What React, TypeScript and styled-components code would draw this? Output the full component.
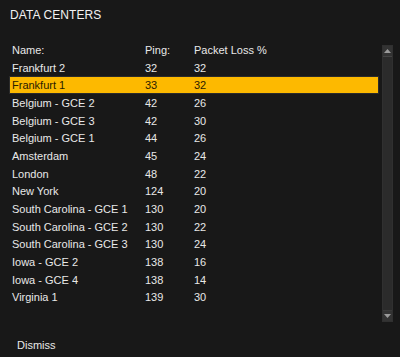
import React from 'react';
import styled, { createGlobalStyle } from 'styled-components';

const servers = [
  { name: 'Frankfurt 2', ping: 32, loss: 32 },
  { name: 'Frankfurt 1', ping: 33, loss: 32, selected: true },
  { name: 'Belgium - GCE 2', ping: 42, loss: 26 },
  { name: 'Belgium - GCE 3', ping: 42, loss: 30 },
  { name: 'Belgium - GCE 1', ping: 44, loss: 26 },
  { name: 'Amsterdam', ping: 45, loss: 24 },
  { name: 'London', ping: 48, loss: 22 },
  { name: 'New York', ping: 124, loss: 20 },
  { name: 'South Carolina - GCE 1', ping: 130, loss: 20 },
  { name: 'South Carolina - GCE 2', ping: 130, loss: 22 },
  { name: 'South Carolina - GCE 3', ping: 130, loss: 24 },
  { name: 'Iowa - GCE 2', ping: 138, loss: 16 },
  { name: 'Iowa - GCE 4', ping: 138, loss: 14 },
  { name: 'Virginia 1', ping: 139, loss: 30 },
];

const GlobalStyle = createGlobalStyle`
  body {
    margin: 0;
    background: #181818;
    font-family: 'Liberation Sans', Arial, sans-serif;
  }
`;

const App = () => {
  return (
    <Window>
      <GlobalStyle />
      <Title>DATA CENTERS</Title>
      <Panel>
        <List>
          <Row $header>
            <span>Name:</span>
            <span>Ping:</span>
            <span>Packet Loss %</span>
          </Row>
          {servers.map((s) => (
            <Row key={s.name} $selected={s.selected}>
              <span>{s.name}</span>
              <span>{s.ping}</span>
              <span>{s.loss}</span>
            </Row>
          ))}
        </List>
        <Scrollbar>
          <ArrowButton>
            <svg width="7" height="4" viewBox="0 0 7 4">
              <path d="M0 4 L3.5 0 L7 4 Z" fill="#9a9a9a" />
            </svg>
          </ArrowButton>
          <Track />
          <ArrowButton>
            <svg width="7" height="4" viewBox="0 0 7 4">
              <path d="M0 0 L3.5 4 L7 0 Z" fill="#9a9a9a" />
            </svg>
          </ArrowButton>
        </Scrollbar>
      </Panel>
      <Footer>
        <DismissButton>Dismiss</DismissButton>
      </Footer>
    </Window>
  );
};

const Window = styled.main`
  width: 400px;
  height: 357px;
  overflow: hidden;
  background: #181818;
  color: #e8e8e8;
  display: flex;
  flex-direction: column;
`;

const Title = styled.h1`
  margin: 0;
  padding: 8px 0 0 10px;
  height: 25px;
  font-size: 12px;
  font-weight: normal;
  line-height: 14px;
  color: #f2f2f2;
  letter-spacing: 0.1px;
`;

const Panel = styled.section`
  display: flex;
  align-items: flex-start;
  gap: 3px;
  padding: 8px 7px 0 10px;
  height: 284px;
`;

const List = styled.div`
  flex: 1;
  display: flex;
  flex-direction: column;
`;

const Row = styled.div<{ $header?: boolean; $selected?: boolean }>`
  display: grid;
  grid-template-columns: 133px 49px 1fr;
  align-items: center;
  height: 17.7px;
  padding-left: 2px;
  font-size: 11px;
  box-sizing: border-box;
  color: ${(p) => (p.$selected ? '#2a2000' : '#e8e8e8')};
  background: ${(p) => (p.$selected ? '#fdb900' : 'transparent')};
  border: 1px solid ${(p) => (p.$selected ? '#2b2b2b' : 'transparent')};
  margin-left: -1px;
`;

const Scrollbar = styled.div`
  width: 9px;
  height: 275px;
  margin-top: 4px;
  display: flex;
  flex-direction: column;
  background: #2a2a2a;
  border: 1px solid #303030;
`;

const ArrowButton = styled.div`
  height: 10px;
  display: flex;
  align-items: center;
  justify-content: center;
  background: #333;
  border-bottom: 1px solid #444;
  &:last-child {
    border-bottom: none;
    border-top: 1px solid #3a3a3a;
  }
`;

const Track = styled.div`
  flex: 1;
  background: #2b2b2b;
`;

const Footer = styled.footer`
  padding: 10px 0 0 17px;
`;

const DismissButton = styled.span`
  font-size: 11px;
  color: #e8e8e8;
`;

export default App;
